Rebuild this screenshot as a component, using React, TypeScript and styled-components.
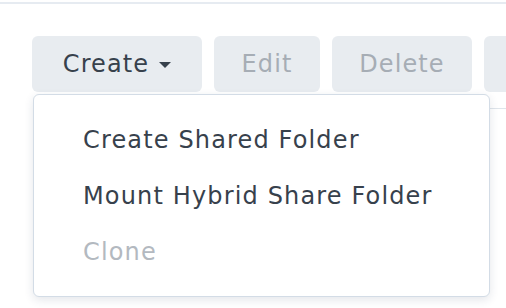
import React from "react";
import styled, { createGlobalStyle } from "styled-components";

const GlobalStyle = createGlobalStyle`
  html, body {
    margin: 0;
    padding: 0;
    background: #ffffff;
    font-family: "DejaVu Sans", Verdana, sans-serif;
  }
`;

const Page = styled.div`
  position: relative;
  width: 506px;
  height: 308px;
  overflow: hidden;
  padding-top: 2px;
  box-sizing: border-box;
`;

const TopRule = styled.div`
  height: 2px;
  background: #e6ebf1;
`;

const Toolbar = styled.div`
  display: flex;
  gap: 12px;
  padding: 32px 0 16px 32px;
  white-space: nowrap;
`;

const Separator = styled.div`
  margin-left: 40px;
  height: 1px;
  background: #dfe5eb;
`;

const ButtonWrap = styled.div`
  position: relative;
`;

const ToolButton = styled.button<{ $width: number; $disabled?: boolean }>`
  display: flex;
  align-items: center;
  justify-content: center;
  gap: 10px;
  flex-shrink: 0;
  width: ${(p) => p.$width}px;
  height: 56px;
  padding: 0;
  border: none;
  border-radius: 6px;
  background: #e8ecf0;
  color: ${(p) => (p.$disabled ? "#a6adb5" : "#37414c")};
  font-family: "DejaVu Sans", Verdana, sans-serif;
  font-size: 24px;
  letter-spacing: 1.1px;
  cursor: ${(p) => (p.$disabled ? "default" : "pointer")};
`;

const Caret = styled.span`
  width: 0;
  height: 0;
  margin-top: 2px;
  border-left: 6px solid transparent;
  border-right: 6px solid transparent;
  border-top: 6px solid #37414c;
`;

const Menu = styled.ul`
  position: absolute;
  top: 58px;
  left: 1px;
  width: 457px;
  margin: 0;
  padding: 17px 0 16px;
  box-sizing: border-box;
  list-style: none;
  background: #ffffff;
  border: 1px solid #d3dce6;
  border-radius: 6px;
  box-shadow: 0 3px 10px rgba(30, 50, 80, 0.12);
  z-index: 2;
`;

const MenuItem = styled.li<{ $disabled?: boolean }>`
  height: 56px;
  display: flex;
  align-items: center;
  padding-left: 49px;
  font-size: 24px;
  letter-spacing: 1.15px;
  color: ${(p) => (p.$disabled ? "#b3b9c0" : "#37414c")};
`;

const items = [
  { label: "Create Shared Folder" },
  { label: "Mount Hybrid Share Folder" },
  { label: "Clone", disabled: true },
];

export default function App() {
  return (
    <Page>
      <GlobalStyle />
      <TopRule />
      <Toolbar>
        <ButtonWrap>
          <ToolButton $width={170}>
            Create <Caret />
          </ToolButton>
          <Menu>
            {items.map((it) => (
              <MenuItem key={it.label} $disabled={it.disabled}>
                {it.label}
              </MenuItem>
            ))}
          </Menu>
        </ButtonWrap>
        <ToolButton $width={106} $disabled>
          Edit
        </ToolButton>
        <ToolButton $width={140} $disabled>
          Delete
        </ToolButton>
        <ToolButton $width={120} $disabled aria-label="Action" />
      </Toolbar>
      <Separator />
    </Page>
  );
}
